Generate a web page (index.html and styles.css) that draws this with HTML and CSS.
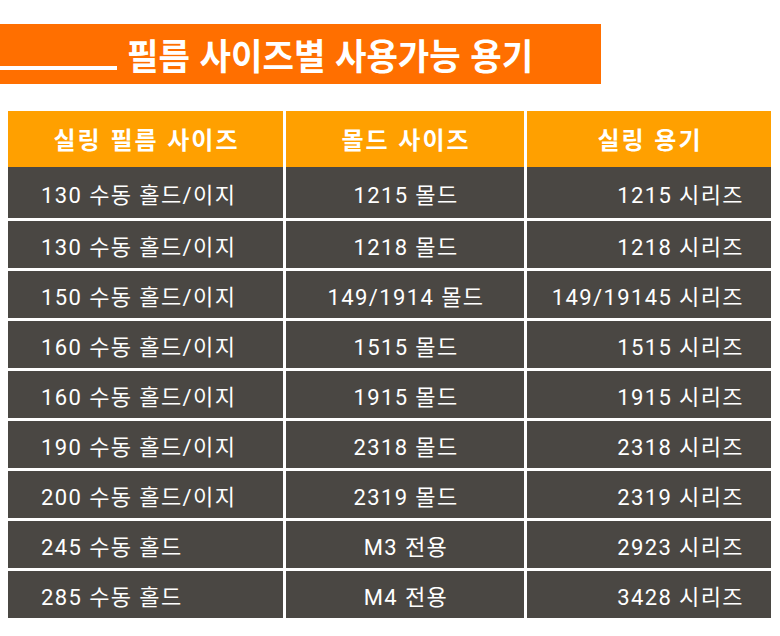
FILE: index.html
```html
<!DOCTYPE html>
<html lang="ko">
<head>
<meta charset="utf-8">
<title>필름 사이즈별 사용가능 용기</title>
<link rel="stylesheet" href="styles.css">
</head>
<body>
<div class="title-bar">
  <span class="title-line"></span>
  <h1 class="title"><span class="title-text">필름 사이즈별 사용가능 용기</span></h1>
</div>
<div class="table">
  <div class="head">
    <div class="hcell">실링 필름 사이즈</div>
    <div class="hcell">몰드 사이즈</div>
    <div class="hcell">실링 용기</div>
  </div>
  <div class="body">
    <div class="cell c1">130 수동 홀드/이지</div><div class="cell c2">1215 몰드</div><div class="cell c3">1215 시리즈</div>
    <div class="cell c1">130 수동 홀드/이지</div><div class="cell c2">1218 몰드</div><div class="cell c3">1218 시리즈</div>
    <div class="cell c1">150 수동 홀드/이지</div><div class="cell c2">149/1914 몰드</div><div class="cell c3">149/19145 시리즈</div>
    <div class="cell c1">160 수동 홀드/이지</div><div class="cell c2">1515 몰드</div><div class="cell c3">1515 시리즈</div>
    <div class="cell c1">160 수동 홀드/이지</div><div class="cell c2">1915 몰드</div><div class="cell c3">1915 시리즈</div>
    <div class="cell c1">190 수동 홀드/이지</div><div class="cell c2">2318 몰드</div><div class="cell c3">2318 시리즈</div>
    <div class="cell c1">200 수동 홀드/이지</div><div class="cell c2">2319 몰드</div><div class="cell c3">2319 시리즈</div>
    <div class="cell c1">245 수동 홀드</div><div class="cell c2">M3 전용</div><div class="cell c3">2923 시리즈</div>
    <div class="cell c1">285 수동 홀드</div><div class="cell c2">M4 전용</div><div class="cell c3">3428 시리즈</div>
  </div>
</div>
</body>
</html>
```

FILE: styles.css
```css
html, body {
  margin: 0;
  padding: 0;
  background: #ffffff;
}
body {
  font-family: Roboto, "Noto Sans CJK KR", sans-serif;
  color: #ffffff;
}
.title-bar {
  margin-top: 24px;
  width: 601px;
  height: 60px;
  background: #ff6f00;
  display: flex;
  align-items: center;
}
.title-line {
  display: block;
  width: 117px;
  height: 4px;
  background: #ffffff;
  margin-top: 28px;
  flex: none;
}
.title {
  margin: 0 0 0 10px;
  font-family: "Noto Sans CJK KR", sans-serif;
  font-weight: 700;
  font-size: 36px;
  line-height: 1;
  white-space: nowrap;
}
.title-text {
  display: inline-block;
  transform: scaleX(0.95);
  transform-origin: left center;
}
.table {
  margin: 27px 0 0 8px;
  width: 763px;
}
.head, .body {
  display: grid;
  grid-template-columns: 275px 238px 244px;
  column-gap: 3px;
}
.head {
  height: 56px;
}
.hcell {
  background: #ffa000;
  display: flex;
  align-items: center;
  justify-content: center;
  font-family: "Noto Sans CJK KR", sans-serif;
  font-weight: 700;
  font-size: 24px;
  letter-spacing: 2px;
  padding-left: 2px;
  padding-bottom: 2px;
}
.body {
  grid-template-rows: 51px;
  grid-auto-rows: 47px;
  row-gap: 3px;
}
.cell {
  background: #4a4743;
  display: flex;
  align-items: center;
  font-size: 22px;
  letter-spacing: 1.4px;
  white-space: nowrap;
}
.c1 { justify-content: flex-start; padding-left: 33px; }
.c2 { justify-content: center; padding-left: 2px; }
.c3 { justify-content: flex-end; padding-right: 27px; }
```
